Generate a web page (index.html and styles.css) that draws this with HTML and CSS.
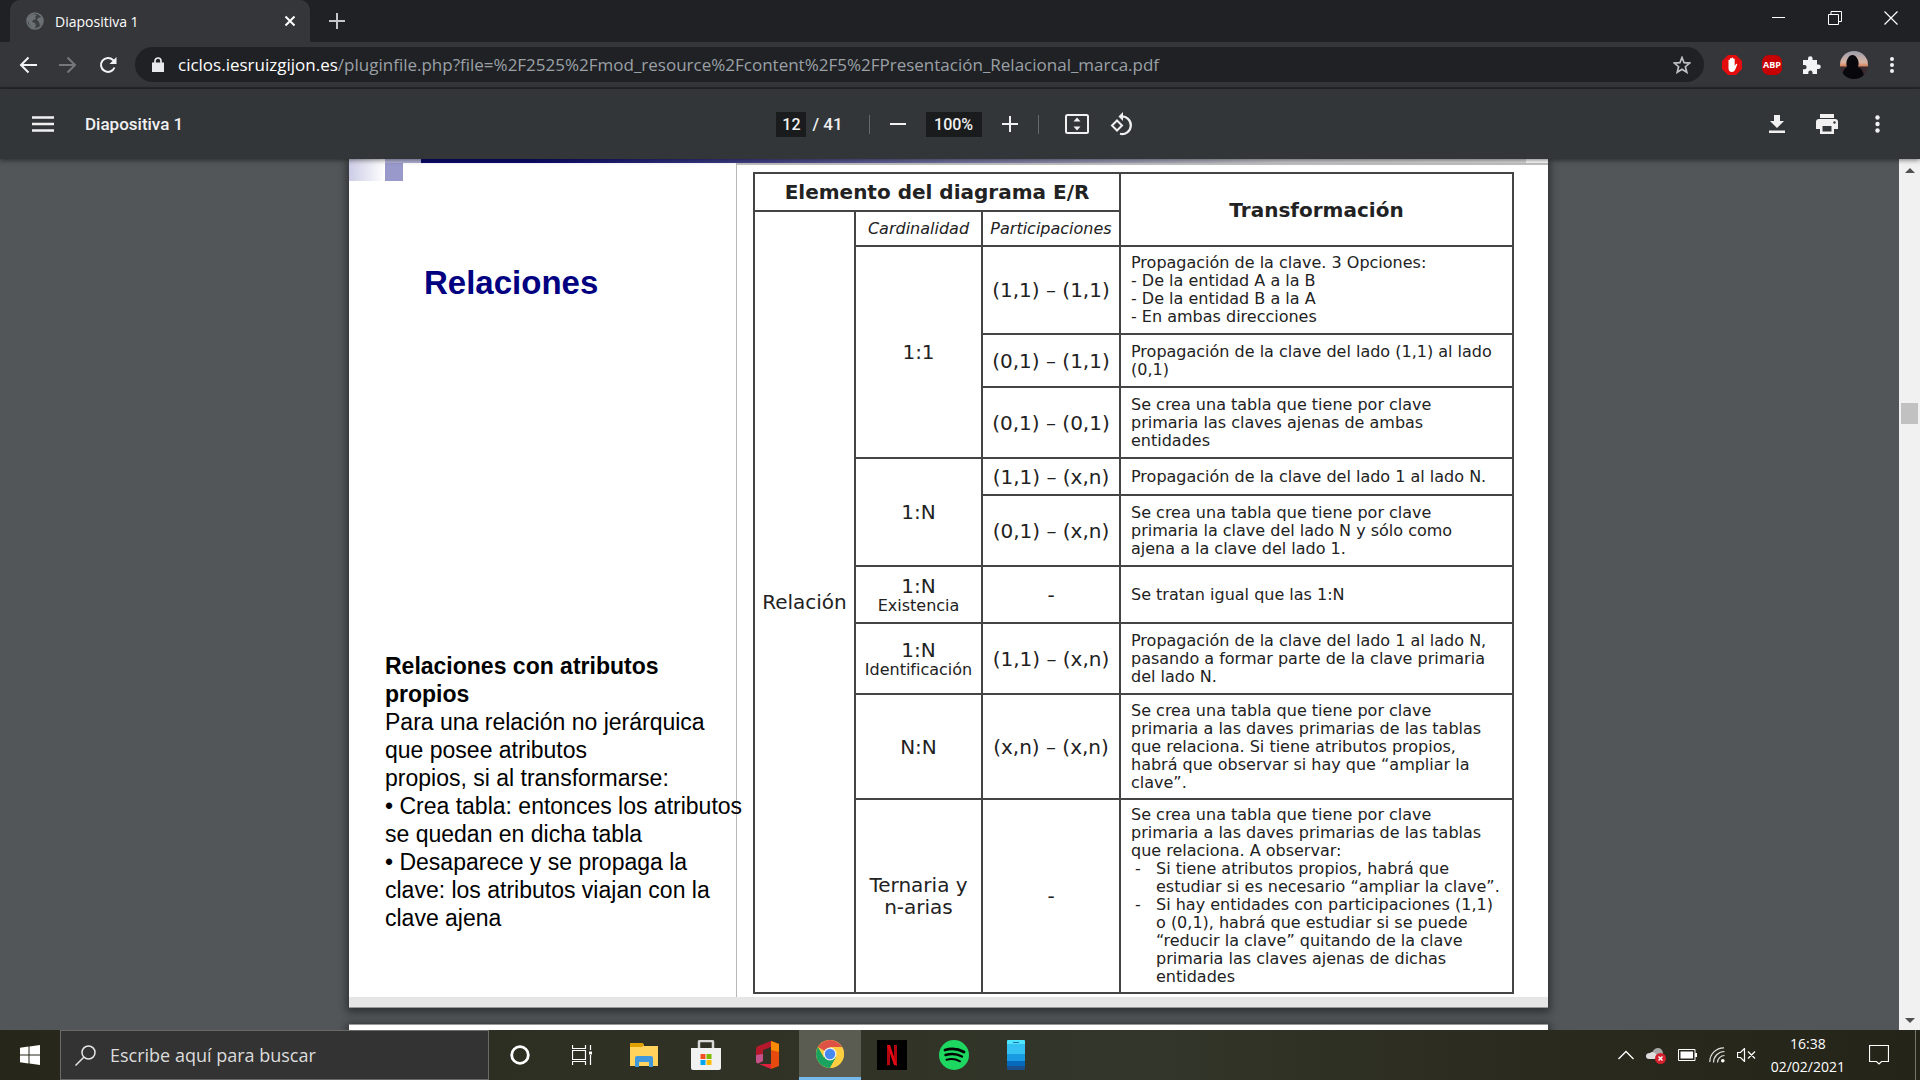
FILE: index.html
```html
<!DOCTYPE html>
<html lang="es">
<head>
<meta charset="utf-8">
<title>Diapositiva 1</title>
<link rel="stylesheet" href="styles.css">
</head>
<body>
<header class="tabstrip">
  <div class="tab">
    <svg class="globe" viewBox="0 0 18 18" width="18" height="18"><circle cx="9" cy="9" r="8" fill="#3c4043" stroke="#6b7075" stroke-width="1.600"/><path d="M2 5l5-3 4 1-2 2 1 2-3 1-1 2 3 1 1 3-2 3-4-3-2-5zM12 6l4-1 1 5-3 4-1-4-2-2z" fill="#6b7075"/></svg>
    <span class="tab-title">Diapositiva 1</span>
    <button class="plain" aria-label="Cerrar pestaña"><svg viewBox="0 0 12 12" width="12" height="12"><path d="M1.500 1.500l9 9M10.500 1.500l-9 9" stroke="#fff" stroke-width="2"/></svg></button>
  </div>
  <button class="plain newtab" aria-label="Nueva pestaña"><svg viewBox="0 0 16 16" width="16" height="16"><path d="M8 0v16M0 8h16" stroke="#c4c6c9" stroke-width="2"/></svg></button>
  <div class="window-controls">
    <button class="plain" aria-label="Minimizar"><svg viewBox="0 0 14 14" width="14" height="14"><path d="M0 6.500h13" stroke="#fff"/></svg></button>
    <button class="plain" aria-label="Restaurar"><svg viewBox="0 0 14 14" width="14" height="14"><path d="M.5 3.500h10v10h-10zM3 3V.5h10.500v10H11" fill="none" stroke="#fff"/></svg></button>
    <button class="plain" aria-label="Cerrar"><svg viewBox="0 0 14 14" width="14" height="14"><path d="M.5.5l13 13M13.500.5l-13 13" stroke="#fff" stroke-width="1.200"/></svg></button>
  </div>
</header>

<nav class="toolbar">
  <button class="plain" aria-label="Atrás"><svg viewBox="0 0 18 18" width="18" height="18"><path d="M18 9H2M9.500 1.500L2 9l7.500 7.500" fill="none" stroke="#f1f3f4" stroke-width="2"/></svg></button>
  <button class="plain" aria-label="Adelante"><svg viewBox="0 0 18 18" width="18" height="18"><path d="M0 9h16M8.500 1.500L16 9l-7.500 7.500" fill="none" stroke="#75777a" stroke-width="2"/></svg></button>
  <button class="plain" aria-label="Recargar"><svg viewBox="0 0 18 18" width="18" height="18"><path d="M15.500 11.500A7 7 0 1 1 14 4l2 2" fill="none" stroke="#f1f3f4" stroke-width="2"/><path d="M17.500 1v7h-7z" fill="#f1f3f4"/></svg></button>
  <div class="omnibox">
    <svg viewBox="0 0 12 15" width="12" height="15"><path d="M0 5.500h12V15H0z" fill="#e8eaed"/><path d="M3 6V4a3 3 0 0 1 6 0v2" fill="none" stroke="#e8eaed" stroke-width="1.700"/></svg>
    <div class="url"><span class="host">ciclos.iesruizgijon.es</span>/pluginfile.php?file=%2F2525%2Fmod_resource%2Fcontent%2F5%2FPresentación_Relacional_marca.pdf</div>
    <button class="plain" aria-label="Marcador"><svg viewBox="0 0 18 18" width="18" height="18"><path d="M9 1.500l2.100 5.200 5.600.4-4.300 3.600 1.400 5.600L9 13.300l-4.800 3 1.400-5.600L1.300 7.100l5.600-.4z" fill="none" stroke="#bdc1c6" stroke-width="1.700"/></svg></button>
  </div>
  <div class="extensions">
    <button class="plain" aria-label="AdBlock"><svg viewBox="0 0 20 20" width="20" height="20"><path d="M6 0h8l6 6v8l-6 6H6l-6-6V6z" fill="#e40d0d"/><path d="M6.500 10V5q.8-1 1.500 0v4V3.500q.8-1 1.600 0V9 3q.8-1 1.600 0v6-5q.8-1 1.500 0v7l1.300-2q1.200-.5 1.300.4L13 15q-1 2-3 2-3.500 0-3.500-4z" fill="#fff"/></svg></button>
    <button class="plain abp">ABP</button>
    <button class="plain" aria-label="Extensiones"><svg viewBox="0 0 20 20" width="20" height="20"><path d="M1 5h5V3.500a2.300 2.300 0 0 1 4.600 0V5H15v4.500h1.500a2.300 2.300 0 0 1 0 4.600H15V19h-4.500v-1.500a2.100 2.100 0 0 0-4.200 0V19H1v-4.700h1.500a2.100 2.100 0 0 0 0-4.300H1z" fill="#f1f3f4"/></svg></button>
    <button class="plain avatar" aria-label="Perfil"><svg viewBox="0 0 28 28" width="28" height="28"><defs><linearGradient id="sky" x1="0" y1="0" x2="0" y2="1"><stop offset="0" stop-color="#9a9dab"/><stop offset=".4" stop-color="#d9b5a6"/><stop offset=".52" stop-color="#d98c64"/><stop offset=".58" stop-color="#3a2b30"/></linearGradient><clipPath id="round"><circle cx="14" cy="14" r="14"/></clipPath></defs><g clip-path="url(#round)"><path d="M0 0h28v28H0z" fill="url(#sky)"/><path d="M2 28c0-7 2-10 5-12-1-3-1-6 1-9 2-4 7-4 9 0 2 3 2 6 1 9 4 2 6 5 6 12z" fill="#08080c"/></g></svg></button>
    <button class="plain" aria-label="Menú"><svg viewBox="0 0 4 18" width="4" height="18"><g fill="#f1f3f4"><circle cx="2" cy="3" r="2"/><circle cx="2" cy="9" r="2"/><circle cx="2" cy="15" r="2"/></g></svg></button>
  </div>
</nav>

<div class="pdfbar">
  <div class="pdf-left">
    <button class="plain" aria-label="Índice"><svg viewBox="0 0 22 16" width="22" height="16"><path d="M0 1.500h22M0 8h22M0 14.500h22" stroke="#f1f1f1" stroke-width="2.500"/></svg></button>
    <span class="pdf-title">Diapositiva 1</span>
  </div>
  <div class="pdf-center">
    <div class="pager"><input class="page-input" aria-label="Página" value="12"><span>/ 41</span></div>
    <i class="sep"></i>
    <button class="plain" aria-label="Reducir"><svg viewBox="0 0 16 16" width="16" height="16"><path d="M0 8h16" stroke="#f1f1f1" stroke-width="2"/></svg></button>
    <input class="zoom-input" aria-label="Zoom" value="100%">
    <button class="plain" aria-label="Ampliar"><svg viewBox="0 0 16 16" width="16" height="16"><path d="M8 0v16M0 8h16" stroke="#f1f1f1" stroke-width="2"/></svg></button>
    <i class="sep"></i>
    <button class="plain fit" aria-label="Ajustar a la página"><svg viewBox="0 0 24 20" width="24" height="20"><rect x="1" y="1" width="22" height="18" rx="1.500" fill="none" stroke="#f1f1f1" stroke-width="2"/><path d="M12 3.500l3.500 4h-7zM12 16.500l3.500-4h-7z" fill="#f1f1f1"/></svg></button>
    <button class="plain" aria-label="Girar"><svg viewBox="0 0 24 24" width="24" height="24"><path d="M8 8.500L13 13.500l-5 5-5-5z" fill="none" stroke="#f1f1f1" stroke-width="2"/><path d="M12 4.500a8.800 8.800 0 1 1-1 17.300" fill="none" stroke="#f1f1f1" stroke-width="2.200"/><path d="M14 0v9L9.500 4.500z" fill="#f1f1f1"/></svg></button>
  </div>
  <div class="pdf-right">
    <button class="plain" aria-label="Descargar"><svg viewBox="0 0 16 18" width="16" height="18"><path d="M5 0h6v6h4l-7 7-7-7h4zM0 15.500h16V18H0z" fill="#f1f1f1"/></svg></button>
    <button class="plain" aria-label="Imprimir"><svg viewBox="0 0 22 20" width="22" height="20"><path d="M4 0h14v4H4zM3 5h16a3 3 0 0 1 3 3v7h-4v5H4v-5H0V8a3 3 0 0 1 3-3z" fill="#f1f1f1"/><path d="M6.500 12h9v5.500h-9z" fill="#323639"/><circle cx="18.500" cy="8.500" r="1.200" fill="#323639"/></svg></button>
    <button class="plain" aria-label="Más acciones"><svg viewBox="0 0 5 18" width="5" height="18"><g fill="#f1f1f1"><circle cx="2.500" cy="2.500" r="2.200"/><circle cx="2.500" cy="9" r="2.200"/><circle cx="2.500" cy="15.500" r="2.200"/></g></svg></button>
  </div>
</div>

<main class="viewer">
  <div class="pages">
    <article class="slide">
      <div class="band"><i class="band-fade"></i><i class="band-light"></i><i class="band-dark"></i></div>
      <div class="slide-body">
        <section class="notes">
          <div class="corner"><i class="corner-fade"></i><i class="corner-square"></i></div>
          <h1>Relaciones</h1>
          <div class="text">
            <h2>Relaciones con atributos<br>propios</h2>
            <p>Para una relación no jerárquica<br>que posee atributos<br>propios, si al transformarse:<br>• Crea tabla: entonces los atributos<br>se quedan en dicha tabla<br>• Desaparece y se propaga la<br>clave: los atributos viajan con la<br>clave ajena</p>
          </div>
        </section>
        <section class="figure">
          <table>
            <colgroup><col class="c1"><col class="c2"><col class="c3"><col class="c4"></colgroup>
            <tr class="r38"><th colspan="3">Elemento del diagrama E/R</th><th rowspan="2">Transformación</th></tr>
            <tr class="r35"><td rowspan="10" class="big">Relación</td><td class="sub">Cardinalidad</td><td class="sub">Participaciones</td></tr>
            <tr class="r88"><td rowspan="3" class="big">1:1</td><td class="big">(1,1) – (1,1)</td><td class="desc">Propagación de la clave. 3 Opciones:<br>- De la entidad A a la B<br>- De la entidad B a la A<br>- En ambas direcciones</td></tr>
            <tr class="r53"><td class="big">(0,1) – (1,1)</td><td class="desc">Propagación de la clave del lado (1,1) al lado<br>(0,1)</td></tr>
            <tr class="r71"><td class="big">(0,1) – (0,1)</td><td class="desc">Se crea una tabla que tiene por clave<br>primaria las claves ajenas de ambas<br>entidades</td></tr>
            <tr class="r37"><td rowspan="2" class="big">1:N</td><td class="big">(1,1) – (x,n)</td><td class="desc">Propagación de la clave del lado 1 al lado N.</td></tr>
            <tr class="r71"><td class="big">(0,1) – (x,n)</td><td class="desc">Se crea una tabla que tiene por clave<br>primaria la clave del lado N y sólo como<br>ajena a la clave del lado 1.</td></tr>
            <tr class="r57"><td class="big">1:N<small>Existencia</small></td><td class="big">-</td><td class="desc">Se tratan igual que las 1:N</td></tr>
            <tr class="r71"><td class="big">1:N<small>Identificación</small></td><td class="big">(1,1) – (x,n)</td><td class="desc">Propagación de la clave del lado 1 al lado N,<br>pasando a formar parte de la clave primaria<br>del lado N.</td></tr>
            <tr class="r105"><td class="big">N:N</td><td class="big">(x,n) – (x,n)</td><td class="desc">Se crea una tabla que tiene por clave<br>primaria a las daves primarias de las tablas<br>que relaciona. Si tiene atributos propios,<br>habrá que observar si hay que “ampliar la<br>clave”.</td></tr>
            <tr class="r194"><td class="big">Ternaria y<br>n-arias</td><td class="big">-</td><td class="desc">Se crea una tabla que tiene por clave<br>primaria a las daves primarias de las tablas<br>que relaciona. A observar:
              <ul><li>Si tiene atributos propios, habrá que<br>estudiar si es necesario “ampliar la clave”.</li><li>Si hay entidades con participaciones (1,1)<br>o (0,1), habrá que estudiar si se puede<br>“reducir la clave” quitando de la clave<br>primaria las claves ajenas de dichas<br>entidades</li></ul></td></tr>
          </table>
        </section>
      </div>
      <div class="slide-foot"></div>
    </article>
    <article class="slide next"></article>
  </div>
  <div class="scrollbar">
    <svg viewBox="0 0 10 6" width="10" height="6"><path d="M0 5l5-5 5 5z" fill="#505050"/></svg>
    <div class="track"><i class="thumb"></i></div>
    <svg viewBox="0 0 10 6" width="10" height="6"><path d="M0 0l5 5 5-5z" fill="#505050"/></svg>
  </div>
</main>

<footer class="taskbar">
  <button class="plain start" aria-label="Inicio"><svg viewBox="0 0 20 20" width="20" height="20"><path d="M0 2.800l8.500-1.200v7.900H0zM9.500 1.400L20 0v9.500H9.500zM0 10.500h8.500v7.900L0 17.200zM9.500 10.500H20V20L9.500 18.600z" fill="#fff"/></svg></button>
  <label class="search"><svg viewBox="0 0 21 21" width="21" height="21"><circle cx="13.500" cy="7.500" r="6.500" fill="none" stroke="#e6e6e6" stroke-width="1.500"/><path d="M9 12l-8.500 8.500" stroke="#e6e6e6" stroke-width="1.500"/></svg><input class="search-input" aria-label="Buscar" placeholder="Escribe aquí para buscar"></label>
  <div class="apps">
    <button class="plain app" aria-label="Cortana"><svg viewBox="0 0 20 20" width="20" height="20"><circle cx="10" cy="10" r="8.300" fill="none" stroke="#fff" stroke-width="2.800"/></svg></button>
    <button class="plain app" aria-label="Vista de tareas"><svg viewBox="0 0 20 20" width="20" height="20"><path d="M.5 0v3.500h13V0M.5 5.500h13v9H.5zM.5 20v-3.500h13V20M18.500 0v5M18.500 10v10" fill="none" stroke="#fff" stroke-width="1.200"/><path d="M17 6.500h3v3h-3z" fill="#fff"/></svg></button>
    <button class="plain app" aria-label="Explorador"><svg viewBox="0 0 28 24" width="28" height="24"><path d="M0 1q0-1 1-1h11q1 0 1 1l1 2H28v20H0z" fill="#ffd35c"/><path d="M0 1q0-1 1-1h11q1 0 2 1.500L12 4H0z" fill="#e0a000"/><path d="M5 24v-9q0-2 2-2h14q2 0 2 2v9h-4v-5h-10v5z" fill="#3f97dc"/></svg></button>
    <button class="plain app" aria-label="Tienda"><svg viewBox="0 0 30 30" width="30" height="30"><path d="M8 9V2q0-1 1-1h12q1 0 1 1v7" fill="none" stroke="#d8d8d8" stroke-width="2.500"/><path d="M0 8h30v20q0 2-2 2H2q-2 0-2-2z" fill="#f1f1f1"/><path d="M9.500 14h5v5h-5z" fill="#f25022"/><path d="M15.500 14h5v5h-5z" fill="#7fba00"/><path d="M9.500 20h5v5h-5z" fill="#00a4ef"/><path d="M15.500 20h5v5h-5z" fill="#ffb900"/></svg></button>
    <button class="plain app" aria-label="Office"><svg viewBox="0 0 24 28" width="24" height="28"><path d="M15 0l8 3v22l-8 3z" fill="#e64a0e"/><path d="M15 0l8 3v8l-8-2z" fill="#f98a05"/><path d="M15 0v6L7 9v11l-5 2.500Q0 22 0 20V8q0-2 2-3z" fill="#b4182a"/><path d="M7 13v7l-5 2.500Q0 22 0 20v-6z" fill="#c4538c"/><path d="M3 23h12v5z" fill="#e0203c"/></svg></button>
    <button class="plain app active" aria-label="Chrome"><svg viewBox="0 0 28 28" width="28" height="28"><circle cx="14" cy="14" r="14" fill="#ffcd40"/><path d="M14 14L1.900 7A14 14 0 0 1 26.100 7H14z" fill="#de5246"/><path d="M14 14l6 3.500L14 28A14 14 0 0 1 1.900 7l6 10.500z" fill="#1aa260"/><path d="M14 7h12.100A14 14 0 0 1 14 28l6-10.500z" fill="#ffcd40"/><circle cx="14" cy="14" r="6.500" fill="#f1f1f1"/><circle cx="14" cy="14" r="5.200" fill="#4688f1"/></svg></button>
    <button class="plain app" aria-label="Netflix"><svg viewBox="0 0 30 30" width="30" height="30"><path d="M0 0h30v30H0z"/><path d="M10 5h3v20l-3 .5zM17 5h3v20.500l-3-.5z" fill="#b1060f"/><path d="M10 5h3l7 20.500-3-.5z" fill="#e50914"/></svg></button>
    <button class="plain app" aria-label="Spotify"><svg viewBox="0 0 30 30" width="30" height="30"><circle cx="15" cy="15" r="15" fill="#1ed760"/><g fill="none" stroke="#000" stroke-linecap="round"><path d="M6 10q10-3 19 2" stroke-width="2.800"/><path d="M6.500 15q9-2.500 16.500 1.500" stroke-width="2.400"/><path d="M7.500 19.800q7-2 13.500 1.500" stroke-width="2"/></g></svg></button>
    <button class="plain app" aria-label="Tu teléfono"><svg viewBox="0 0 18 30" width="18" height="30"><path d="M0 1q0-1 1-1h16q1 0 1 1v4H0z" fill="#50e6ff"/><path d="M0 4h18v10H0z" fill="#35c1f1"/><path d="M0 14h18v7H0z" fill="#199be2"/><path d="M0 21h18v5H0z" fill="#0669bc"/><path d="M0 26h18v3q0 1-1 1H1q-1 0-1-1z" fill="#1a4f8c"/><path d="M6 2.500h6" stroke="#1a6fae"/></svg></button>
  </div>
  <div class="tray">
    <svg viewBox="0 0 16 10" width="16" height="10"><path d="M.5 9L8 1.500 15.500 9" fill="none" stroke="#fff" stroke-width="1.300"/></svg>
    <svg viewBox="0 0 20 17" width="20" height="17"><path d="M6 6q2-5 6-5t5 5v4H6z" fill="#a8a8a8"/><path d="M0 9q0-3 4-3 2-2 5 0l5 6H3q-3 0-3-3z" fill="#dedede"/><circle cx="14.500" cy="11.500" r="5.500" fill="#d4202c"/><path d="M12.500 9.500l4 4M16.500 9.500l-4 4" stroke="#fff" stroke-width="1.400"/></svg>
    <svg viewBox="0 0 19 12" width="19" height="12"><path d="M.5.500h16.500v11H.5z" fill="none" stroke="#fff"/><path d="M2.500 2.500H15v7H2.500zM17 4h2v4h-2z" fill="#fff"/></svg>
    <svg viewBox="0 0 16 16" width="16" height="16"><g fill="none" stroke="#e0e0e0" stroke-width="1.200"><path d="M.8 15A14 14 0 0 1 15 .8"/><path d="M4.500 15.500A11 11 0 0 1 15.500 4.500"/><path d="M8.500 15.500A7 7 0 0 1 15.500 8.500"/></g><circle cx="13.800" cy="13.800" r="1.800" fill="#fff"/></svg>
    <svg viewBox="0 0 19 14" width="19" height="14"><path d="M.5 4.500h3l4-4v13l-4-4h-3zM11 3.500l7 7M18 3.500l-7 7" fill="none" stroke="#fff" stroke-width="1.200"/></svg>
    <div class="clock"><span>16:38</span><span>02/02/2021</span></div>
    <svg viewBox="0 0 20 20" width="20" height="20"><path d="M.5 .5h19v16h-7L10 19l-2.500-2.500h-7z" fill="none" stroke="#fff" stroke-width="1.200"/></svg>
    <i class="peek"></i>
  </div>
</footer>
</body>
</html>
```
FILE: styles.css
```css
* { box-sizing: border-box; }
body { margin: 0; height: 100vh; display: flex; flex-direction: column; overflow: hidden; background: #525659; font-family: "Open Sans", "Noto Sans", sans-serif; color: #fff; }
svg { display: block; flex: none; }
.plain { border: 0; padding: 0; margin: 0; background: none; color: inherit; font: inherit; display: flex; align-items: center; justify-content: center; flex: none; }
i { display: block; }

.tabstrip { height: 42px; flex: none; background: #202124; display: flex; align-items: center; padding-left: 10px; }
.tab { width: 300px; height: 42px; background: #35363a; border-radius: 10px 10px 0 0; display: flex; align-items: center; padding: 0 14px 0 16px; }
.tab-title { flex: 1; font-size: 14px; padding-left: 11px; }
.newtab { margin-left: 19px; }
.window-controls { margin-left: auto; display: flex; gap: 42px; padding: 0 22px 6px 0; }

.toolbar { height: 47px; flex: none; background: #35363a; border-bottom: 2px solid #282828; display: flex; align-items: center; padding-left: 19px; gap: 22px; }
.omnibox { flex: 1; height: 35px; border-radius: 18px; background: #202124; display: flex; align-items: center; padding: 0 13px 0 17px; margin-left: -4px; }
.url { flex: 1; font-size: 17px; line-height: 24px; color: #9aa0a6; padding-left: 14px; white-space: nowrap; }
.host { color: #fff; }
.extensions { display: flex; align-items: center; gap: 20px; padding-right: 26px; margin-left: -4px; }
.abp { width: 20px; height: 20px; background: #c70000; border-radius: 7px; font: bold 9px "Open Sans", sans-serif; }
.avatar { margin: 0 2px 0 -2px; }

.pdfbar { height: 70px; flex: none; background: #323639; display: grid; grid-template-columns: 1fr auto 1fr; align-items: center; font-family: Roboto, sans-serif; font-weight: 500; font-size: 17px; color: #f1f1f1; box-shadow: 0 1px 5px #0008; z-index: 1; }
.pdf-left { display: flex; align-items: center; gap: 31px; padding-left: 32px; }
.pdf-center { display: flex; align-items: center; gap: 20px; padding-right: 11px; }
.pager { display: flex; align-items: center; gap: 6px; margin-right: 6px; }
.page-input, .zoom-input { border: 0; padding: 0; height: 25px; background: #191b1c; color: #f1f1f1; font: inherit; font-size: 16px; text-align: center; }
.page-input { width: 30px; }
.zoom-input { width: 56px; }
.sep { width: 1px; height: 19px; background: #66696b; }
.fit { margin-left: 6px; }
.pdf-right { display: flex; align-items: center; justify-content: flex-end; gap: 26px; padding-right: 31px; }
.pdf-right .plain { width: 24px; }

.viewer { flex: 1; min-height: 0; display: flex; overflow: hidden; }
.pages { flex: 1; min-width: 0; padding: 0 18px 0 16px; }
.slide { max-width: 1199px; margin: 0 auto; background: #fff; color: #000; box-shadow: 0 2px 8px 2px #0007; border-bottom: 1px solid #999; }
.next { margin-top: 16px; height: 60px; border-top: 1px solid #999; }
.band { display: flex; height: 4px; }
.band-fade { width: 36px; background: linear-gradient(90deg, #cccce6, #fff); }
.band-light { width: 36px; background: #b4b4da; }
.band-dark { flex: 1; margin-right: 22px; background: linear-gradient(90deg, #0b0b70 10%, #c8c8cc 78%, #d8d8d8); }
.slide-body { display: flex; }
.notes { width: 388px; flex: none; border-right: 1px solid #b8b8b8; font-family: "Liberation Sans", Arial, sans-serif; white-space: nowrap; }
.corner { display: flex; height: 18px; }
.corner-fade { width: 36px; background: linear-gradient(90deg, #cccce6, #fff); }
.corner-square { width: 18px; background: #9999cc; }
h1 { margin: 0; padding: 83px 0 0 75px; font-size: 33px; line-height: 38px; color: #000080; }
.text { padding: 350px 0 0 36px; font-size: 23px; line-height: 28px; }
h2, p { margin: 0; font-size: 23px; }
.figure { flex: 1; padding: 7px 34px 3px 16px; border-top: 2px solid #c0c0c0; }
table { width: 100%; border-collapse: collapse; table-layout: fixed; font-family: "DejaVu Sans", Verdana, sans-serif; color: #222; }
.c1 { width: 101px; }
.c2 { width: 127px; }
.c3 { width: 138px; }
th, td { border: 2px solid #444; padding: 0; text-align: center; white-space: nowrap; }
th { font-size: 20px; line-height: 24px; }
.big { font-size: 20px; line-height: 22px; }
small { display: block; font-size: 16px; line-height: 18px; }
.sub { font-size: 16px; line-height: 18px; font-style: italic; }
.desc { font-size: 16px; line-height: 18px; text-align: left; padding-left: 10px; }
ul { margin: 0; padding: 0; list-style: none; }
li { padding-left: 25px; }
li::before { content: "-"; float: left; margin-left: -21px; }
.r35 { height: 35px; }
.r37 { height: 37px; }
.r38 { height: 38px; }
.r53 { height: 53px; }
.r57 { height: 57px; }
.r71 { height: 71px; }
.r88 { height: 88px; }
.r105 { height: 105px; }
.r194 { height: 194px; }
.slide-foot { height: 10px; background: #e5e5e5; }
.scrollbar { width: 21px; flex: none; background: #f1f1f1; display: flex; flex-direction: column; align-items: center; padding: 9px 0 6px; }
.track { flex: 1; width: 17px; padding-top: 229px; }
.thumb { height: 21px; background: #c1c1c1; }

.taskbar { height: 50px; flex: none; background: linear-gradient(90deg, #27261a, #2f3024 30%, #33362a 60%, #2b2a1e 80%, #252419); display: flex; z-index: 1; }
.start { width: 60px; }
.search { width: 429px; background: #333; border: 1px solid #6a6a66; display: flex; align-items: center; padding-left: 14px; gap: 14px; }
.search-input { flex: 1; border: 0; padding: 0; background: none; font: 18px "Open Sans", sans-serif; color: #fff; }
.search-input::placeholder { color: #dcdcdc; opacity: 1; }
.apps { display: flex; }
.app { width: 62px; }
.active { background: #5a5b51; border-bottom: 3px solid #76b9ed; }
.tray { margin-left: auto; display: flex; align-items: center; gap: 12px; }
.clock { display: flex; flex-direction: column; align-items: center; font-size: 14px; line-height: 23px; margin: 0 12px 0 3px; }
.peek { width: 1px; height: 50px; background: #77776f; margin: 0 4px 0 14px; }
```
